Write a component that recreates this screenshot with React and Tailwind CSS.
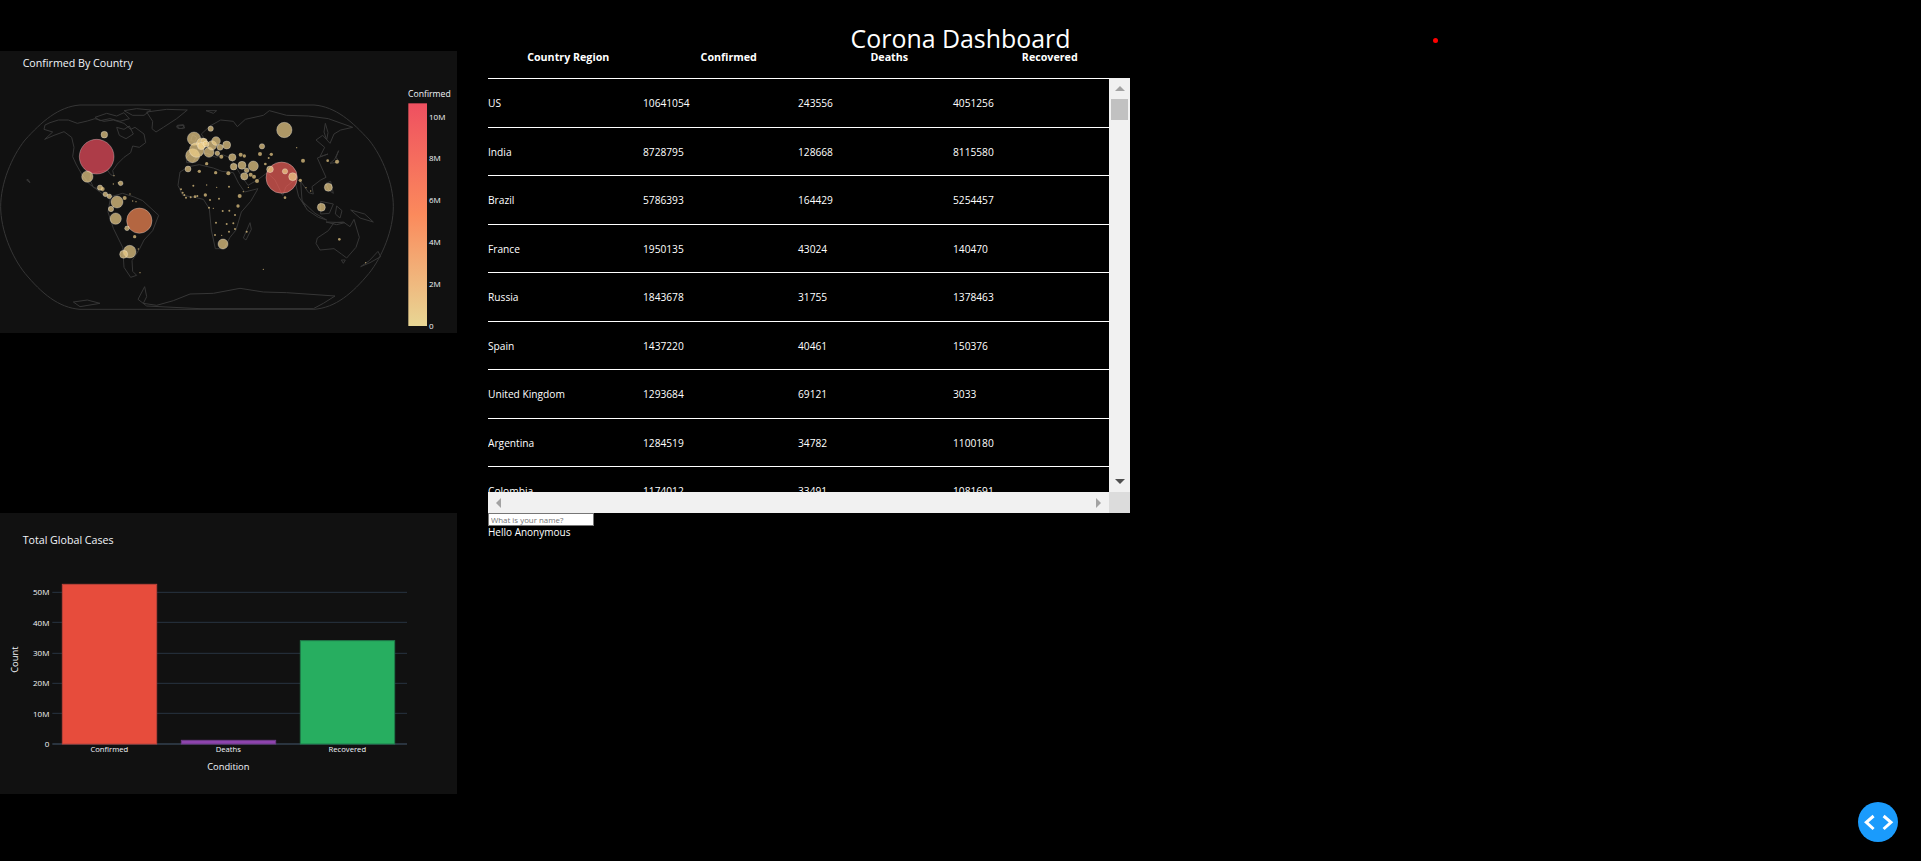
const font = "font-['Open_Sans',sans-serif]";

const rows = [
  ['US', '10641054', '243556', '4051256'],
  ['India', '8728795', '128668', '8115580'],
  ['Brazil', '5786393', '164429', '5254457'],
  ['France', '1950135', '43024', '140470'],
  ['Russia', '1843678', '31755', '1378463'],
  ['Spain', '1437220', '40461', '150376'],
  ['United Kingdom', '1293684', '69121', '3033'],
  ['Argentina', '1284519', '34782', '1100180'],
  ['Colombia', '1174012', '33491', '1081691'],
];

const coast = [
  // north america
  'M135,255 L150,248 L175,240 L205,240 L232,250 L262,243 L285,236 L312,244 L340,240 L372,250 L392,268 L405,262 L432,282 L437,308 L418,322 L398,318 L392,338 L372,352 L352,372 L338,392 L342,408 L332,404 L322,390 L292,396 L272,402 L270,420 L280,442 L300,448 L318,462 L332,468 L322,472 L300,456 L268,432 L245,402 L228,372 L218,350 L222,322 L215,292 L192,275 L162,286 L134,298 L158,276 L132,268 Z',
  // arctic islands
  'M285,232 L320,220 L350,228 L372,218 L388,236 L360,244 L330,236 L300,242 Z',
  'M372,212 L410,206 L452,210 L432,226 L398,226 Z',
  'M350,262 L372,268 L388,258 L400,282 L378,296 L358,286 Z',
  // greenland
  'M440,216 L500,208 L562,210 L530,236 L490,262 L468,276 L456,266 L458,244 Z',
  'M530,258 L552,256 L548,266 L532,264 Z',
  // south america
  'M332,470 L368,460 L400,470 L428,482 L476,526 L458,572 L432,600 L418,628 L396,662 L398,694 L410,706 L392,712 L372,682 L368,622 L340,565 L324,516 Z',
  // africa
  'M540,396 L566,380 L598,374 L640,384 L666,394 L700,398 L716,430 L734,456 L774,446 L752,484 L724,516 L708,570 L690,592 L672,626 L646,626 L634,570 L628,506 L610,478 L584,472 L548,466 L534,436 Z',
  'M750,548 L754,568 L738,600 L730,594 Z',
  // eurasia
  'M560,352 L570,342 L582,346 L596,314 L618,304 L604,282 L630,258 L662,240 L700,244 L712,260 L736,238 L790,226 L808,212 L860,226 L925,228 L985,236 L1058,262 L1022,270 L1002,282 L990,310 L968,286 L948,300 L974,322 L960,350 L984,342 L952,354 L978,412 L962,420 L936,440 L940,462 L926,458 L902,424 L906,480 L916,500 L896,470 L884,420 L858,440 L848,466 L825,420 L802,398 L772,420 L744,436 L718,398 L702,372 L692,354 L668,344 L648,352 L620,340 L592,344 L578,368 L560,368 Z',
  // japan, uk, etc
  'M1016,332 L1008,352 L1018,366 L990,370 L1004,358 Z',
  'M976,250 L984,278 L980,300 L972,276 Z',
  'M578,284 L590,292 L586,304 L572,302 Z',
  'M532,256 L550,254 L554,264 L536,266 Z',
  'M618,212 L650,212 L640,220 Z',
  // se asia islands
  'M905,482 L945,520 L980,540 L955,532 L922,510 Z',
  'M962,484 L1000,492 L988,520 L962,522 Z',
  'M1010,498 L1026,512 L1020,534 L1006,522 Z',
  'M1052,510 L1094,522 L1120,546 L1080,534 Z',
  'M978,430 L992,424 L1000,460 L986,450 Z',
  'M978,546 L1034,548 L1010,554 Z',
  // australia
  'M948,610 L952,594 L985,572 L1002,548 L1030,546 L1050,560 L1062,538 L1078,592 L1068,622 L1040,654 L1024,642 L1002,626 L960,630 Z',
  'M1024,660 L1036,660 L1030,670 Z',
  'M1134,634 L1142,650 L1110,668 L1082,680 L1108,662 Z',
  // antarctica
  'M220,786 L262,780 L300,790 L240,800 Z',
  'M414,778 L434,740 L440,770 L430,790 L470,796 L520,782 L570,762 L640,760 L720,745 L790,756 L860,758 L1005,768 L970,790 L940,806 L600,806 L440,798 Z',
  'M80,420 L90,428 L84,418 Z',
];

const bubbles = [
  [290, 350, 52, '#ef4f60'],
  [845, 413, 47, '#f05f58'],
  [418, 542, 38, '#f98a56'],
  [853, 270, 23], [262, 410, 17], [313, 284, 10], [351, 486, 18], [347, 536, 17],
  [389, 635, 19], [371, 643, 12], [669, 612, 15], [964, 502, 12], [985, 442, 12],
  [582, 296, 20], [578, 347, 21], [590, 330, 22], [627, 337, 15], [606, 310, 16],
  [636, 316, 14], [660, 322, 9], [612, 305, 10], [604, 318, 11], [648, 303, 13],
  [680, 315, 12], [632, 266, 8], [618, 312, 9], [652, 340, 7], [664, 350, 6],
  [697, 352, 11], [726, 376, 12], [760, 378, 15], [733, 409, 11], [701, 380, 10],
  [740, 391, 7], [752, 404, 6], [762, 410, 6], [771, 423, 6], [722, 344, 6],
  [733, 348, 5], [780, 342, 6], [786, 319, 8], [814, 343, 5], [810, 388, 10],
  [855, 394, 8], [878, 410, 12], [901, 421, 5], [909, 362, 6], [1011, 365, 6],
  [983, 362, 4], [564, 387, 9], [598, 394, 5], [620, 371, 5], [647, 398, 5],
  [685, 400, 6], [796, 372, 4], [806, 354, 3], [300, 443, 8], [308, 447, 6],
  [316, 463, 7], [328, 469, 7], [333, 507, 8], [374, 474, 6], [381, 565, 7],
  [404, 590, 5], [362, 430, 7], [616, 465, 5], [719, 468, 6], [714, 498, 5],
  [668, 513, 3], [855, 473, 4], [1018, 598, 4],
  [543, 448, 3], [548, 458, 3], [553, 465, 3], [580, 437, 3], [620, 435, 2],
  [650, 442, 2], [687, 440, 3], [558, 473, 3], [572, 472, 3], [585, 470, 4],
  [592, 468, 3], [657, 476, 3], [745, 442, 2], [730, 455, 2], [630, 480, 3],
  [627, 503, 3], [640, 505, 2], [688, 512, 3], [705, 525, 3], [648, 548, 3],
  [680, 552, 3], [700, 550, 3], [705, 567, 3], [645, 585, 3], [665, 586, 2],
  [687, 575, 3], [740, 575, 3], [890, 323, 2], [932, 453, 2], [918, 443, 2],
  [1097, 668, 2], [790, 688, 2], [415, 627, 2], [420, 698, 2], [398, 483, 2],
  [408, 485, 2], [390, 462, 2], [342, 407, 2], [340, 432, 2], [355, 428, 2],
];

function WorldMap() {
  return (
    <svg viewBox="0 33 1371 846" className="block w-full h-full">
      <path
        d="M240,195 L942,195 C1007,200 1057,245 1107,300 C1147,350 1180,430 1180,500 C1180,570 1147,650 1107,700 C1057,760 1007,803 942,808 L240,808 C175,803 125,760 75,700 C35,650 2,570 2,500 C2,430 35,350 75,300 C125,245 175,200 240,195 Z"
        fill="none"
        stroke="#363636"
        strokeWidth="3"
      />
      {coast.map((d, i) => (
        <path key={i} d={d} fill="none" stroke="#363636" strokeWidth="3" strokeLinejoin="round" />
      ))}
      {bubbles.map(([x, y, r, c], i) => (
        <circle
          key={i}
          cx={x}
          cy={y}
          r={r}
          fill={c || '#f0d08a'}
          fillOpacity="0.7"
          stroke="#ffffff"
          strokeOpacity={r > 6 ? 0.35 : 0}
          strokeWidth="2.5"
        />
      ))}
      <text x="68" y="80" fill="#f2f5fa" fontSize="32">Confirmed By Country</text>
      <text x="1224" y="170" fill="#f2f5fa" fontSize="26">Confirmed</text>
      {[['10M', 240], ['8M', 364], ['6M', 490], ['4M', 616], ['2M', 742], ['0', 868]].map(([t, y]) => (
        <text key={t} x="1287" y={y} fill="#f2f5fa" fontSize="24">{t}</text>
      ))}
      <defs>
        <linearGradient id="scale" x1="0" y1="0" x2="0" y2="1">
          <stop offset="0" stopColor="#ef5060" />
          <stop offset="0.5" stopColor="#fb8a5c" />
          <stop offset="1" stopColor="#e8d694" />
        </linearGradient>
      </defs>
      <rect x="1225" y="190" width="56" height="668" fill="url(#scale)" />
    </svg>
  );
}

function BarChart() {
  const grid = [262, 352, 445, 535, 625];
  const ticks = [['50M', 262], ['40M', 353], ['30M', 444], ['20M', 535], ['10M', 627], ['0', 717]];
  return (
    <svg viewBox="0 24 1371 843" className="block w-full h-full">
      <text x="68" y="116" fill="#f2f5fa" fontSize="32">Total Global Cases</text>
      {grid.map((y) => (
        <line key={y} x1="157" x2="1221" y1={y} y2={y} stroke="#283442" strokeWidth="3" />
      ))}
      <line x1="157" x2="1221" y1="717" y2="717" stroke="#33404f" strokeWidth="4" />
      <rect x="187" y="238" width="283" height="479" fill="#e74c3c" stroke="#b9423a" strokeWidth="3" />
      <rect x="544" y="706" width="283" height="11" fill="#8e44ad" stroke="#6f3a88" strokeWidth="3" />
      <rect x="901" y="407" width="283" height="310" fill="#27ae60" stroke="#1f7c4a" strokeWidth="3" />
      {ticks.map(([t, y]) => (
        <text key={t} x="148" y={y + 9} textAnchor="end" fill="#f2f5fa" fontSize="24">{t}</text>
      ))}
      {[['Confirmed', 328], ['Deaths', 685], ['Recovered', 1042]].map(([t, x]) => (
        <text key={t} x={x} y="741" textAnchor="middle" fill="#f2f5fa" fontSize="23">{t}</text>
      ))}
      <text x="685" y="795" textAnchor="middle" fill="#f2f5fa" fontSize="28">Condition</text>
      <text transform="translate(54,464) rotate(-90)" textAnchor="middle" fill="#f2f5fa" fontSize="28">Count</text>
    </svg>
  );
}

function DataTable() {
  return (
    <div className="w-[642px]">
      <div className="flex h-[42px] items-center text-white text-[10.7px] font-bold">
        <div className="w-[161px] text-center">Country Region</div>
        <div className="w-[161px] text-center">Confirmed</div>
        <div className="w-[161px] text-center">Deaths</div>
        <div className="w-[161px] text-center">Recovered</div>
      </div>
      <div className="grid grid-cols-[621px_21px] grid-rows-[414px_21px] h-[435px]">
        <div className="overflow-hidden border-t border-white">
          {rows.map((r) => (
            <div key={r[0]} className="flex h-[48.5px] shrink-0 items-center border-b border-white pt-[2px] text-white text-[10.2px]">
              {r.map((c, i) => (
                <div key={i} className="w-[155px]">{c}</div>
              ))}
            </div>
          ))}
        </div>
        {/* vertical scrollbar */}
        <div className="flex flex-col items-center bg-[#f1f1f1]">
          <div className="flex h-[21px] w-full items-center justify-center">
            <div className="h-0 w-0 border-x-[5px] border-b-[5px] border-x-transparent border-b-[#a3a3a3]" />
          </div>
          <div className="h-[21px] w-[17px] bg-[#c1c1c1]" />
          <div className="flex-1" />
          <div className="flex h-[21px] w-full items-center justify-center">
            <div className="h-0 w-0 border-x-[5px] border-t-[5px] border-x-transparent border-t-[#505050]" />
          </div>
        </div>
        {/* horizontal scrollbar */}
        <div className="flex items-center justify-between bg-[#f1f1f1] px-[8px]">
          <div className="h-0 w-0 border-y-[5px] border-r-[5px] border-y-transparent border-r-[#a3a3a3]" />
          <div className="h-0 w-0 border-y-[5px] border-l-[5px] border-y-transparent border-l-[#a3a3a3]" />
        </div>
        <div className="bg-[#dcdcdc]" />
      </div>
    </div>
  );
}

export default function App() {
  return (
    <div className={`relative h-[861px] overflow-hidden bg-black ${font}`}>
      <h1 className="h-[51px] pt-[20px] text-center text-[24.9px] leading-[37px] text-white">Corona Dashboard</h1>
      <div className="flex items-start gap-[31px]">
        <div className="flex w-[457px] flex-col gap-[180px]">
          <div className="h-[282px] bg-[#111111]"><WorldMap /></div>
          <div className="h-[281px] bg-[#111111]"><BarChart /></div>
        </div>
        <div className="-mt-[15px]">
          <DataTable />
          <input
            placeholder="What is your name?"
            className="block h-[13px] w-[106px] border border-[#767676] bg-white px-[2px] text-[7.9px] leading-none text-black placeholder:text-[#757575]"
          />
          <div className="text-[10px] leading-[13px] text-white">Hello Anonymous</div>
        </div>
      </div>
      <div className="absolute left-[1433px] top-[38px] h-[5px] w-[5px] rounded-full bg-[#ff0000]" />
      <button className="absolute left-[1858px] top-[802px] flex h-[40px] w-[40px] items-center justify-center rounded-full bg-[#1a9bfc]">
        <svg viewBox="0 0 40 40" className="h-[40px] w-[40px]" fill="none" stroke="#ffffff" strokeWidth="3">
          <path d="M15.6,14 L8.3,20.3 L15.6,27" />
          <path d="M25.6,14 L33,20.3 L25.6,27" />
        </svg>
      </button>
    </div>
  );
}
